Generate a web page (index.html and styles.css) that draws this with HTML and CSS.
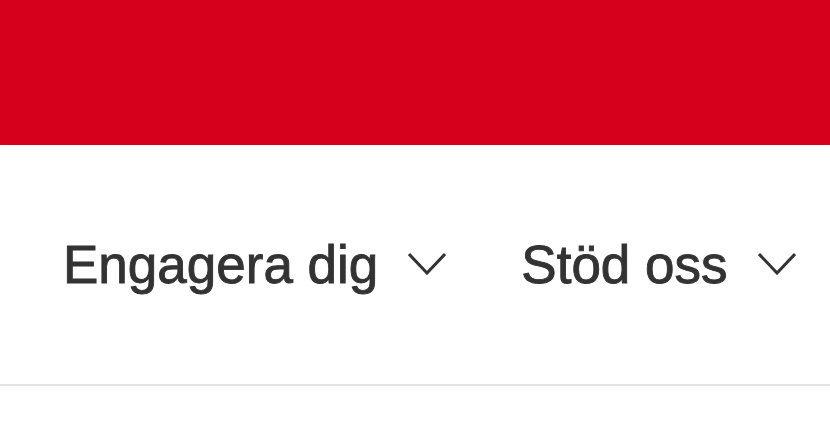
FILE: index.html
```html
<!DOCTYPE html>
<html>
<head>
	<meta charset='utf-8'>
	<title>Meny</title>
	<link rel="stylesheet" href="styles.css">
</head>
<body>
	<div id="topbar"></div>
	<div id="nav">
		<a class="item" href="#">
			<span>Engagera dig</span>
			<svg class="chev" viewBox="0 0 38 22" width="38" height="22"><path d="M1 1 L19 20 L37 1" /></svg>
		</a>
		<a class="item" href="#">
			<span>Stöd oss</span>
			<svg class="chev" viewBox="0 0 38 22" width="38" height="22"><path d="M1 1 L19 20 L37 1" /></svg>
		</a>
	</div>
</body>
</html>
```

FILE: styles.css
```css
html, body {margin:0; padding:0; background:#fff;}
div#topbar{
	height: 145px;
	background: #d6001c;
}
div#nav{
	display: flex;
	align-items: center;
	gap: 75px;
	height: 239px;
	padding-left: 63px;
	border-bottom: 2px solid #e4e4e4;
	box-shadow: 0 5px 10px rgba(0,0,0,0.06);
}
a.item{
	display: flex;
	align-items: center;
	gap: 30px;
	font-family: "Liberation Sans", Arial, sans-serif;
	font-size: 53px;
	line-height: 60px;
	color: #333;
	-webkit-text-stroke: 0.9px #333;
	text-decoration: none;
}
svg.chev{
	margin-top: -2px;
}
svg.chev>path{
	fill: none;
	stroke: #333;
	stroke-width: 3;
}
```
